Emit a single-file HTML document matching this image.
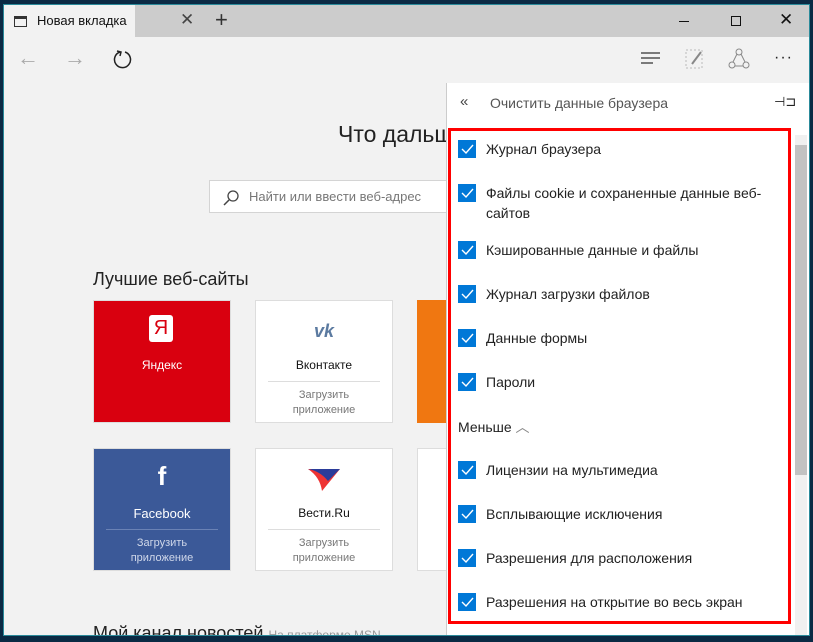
<!DOCTYPE html>
<html><head><meta charset="utf-8"><style>
*{margin:0;padding:0;box-sizing:border-box}
body{width:813px;height:642px;overflow:hidden;background:#0b2a44;font-family:"Liberation Sans","DejaVu Sans",sans-serif;position:relative}
.win{position:absolute;left:3px;top:4px;width:807px;height:632px;background:#f2f2f2;border:1px solid #2a8a9a;overflow:hidden}
.abs{position:absolute}
.tabbar{left:0;top:0;width:805px;height:32px;background:#cccccc}
.tab{left:0;top:0;width:131px;height:32px;background:#f2f2f2}
.cb{position:absolute;left:7px;width:18px;height:18px;background:#0078d7}
.cb svg{position:absolute;left:0;top:0}
.it{position:absolute;left:35px;font-size:14px;color:#222;line-height:20px}
.tile{position:absolute;width:138px;height:123px;border:1px solid #ddd;background:#fff;text-align:center;font-size:12px}
</style></head><body>
<div class="win">
 <div class="abs tabbar"></div>
 <div class="abs tab"></div>
 <div class="abs" style="left:10px;top:11px;width:13px;height:11px;border:1px solid #333;border-top-width:3px"></div>
 <div class="abs" style="left:33px;top:8px;font-size:13px;color:#111">Новая вкладка</div>
 <div class="abs" style="left:176px;top:5px;font-size:17px;color:#444">✕</div>
 <div class="abs" style="left:211px;top:2px;font-size:22px;color:#333;font-weight:300">+</div>
 <div class="abs" style="left:675px;top:16px;width:10px;height:1px;background:#111"></div>
 <div class="abs" style="left:727px;top:11px;width:10px;height:10px;border:1px solid #111"></div>
 <div class="abs" style="left:775px;top:5px;font-size:17px;color:#111">✕</div>
 <div class="abs" style="left:13px;top:40px;font-size:22px;color:#aaa">←</div>
 <div class="abs" style="left:60px;top:40px;font-size:22px;color:#aaa">→</div>
 <svg class="abs" style="left:108px;top:44px" width="22" height="22"><path d="M8 3 A8 8 0 1 0 13 3" fill="none" stroke="#222" stroke-width="1.5"/><path d="M5 2 L9 3 L8 7" fill="none" stroke="#222" stroke-width="1.5"/></svg>
 <svg class="abs" style="left:636px;top:46px" width="22" height="16"><path d="M1 2H20M1 7H20M1 12H13" stroke="#333" stroke-width="1.3"/></svg>
 <svg class="abs" style="left:680px;top:43px" width="22" height="22"><rect x="2" y="2" width="16" height="18" fill="none" stroke="#bbb" stroke-dasharray="2 2"/><path d="M8 16 L17 4" stroke="#888" stroke-width="2"/></svg>
 <svg class="abs" style="left:724px;top:43px" width="22" height="22"><circle cx="11" cy="4" r="3" fill="none" stroke="#888"/><circle cx="4" cy="17" r="3" fill="none" stroke="#888"/><circle cx="18" cy="17" r="3" fill="none" stroke="#888"/><path d="M9 6 L5 14 M13 6 L17 14 M7 18 H15" stroke="#888"/></svg>
 <div class="abs" style="left:770px;top:44px;font-size:16px;color:#222;letter-spacing:1px">···</div>

 <div class="abs" style="left:334px;top:116px;font-size:23px;color:#222">Что дальше?</div>
 <div class="abs" style="left:205px;top:175px;width:260px;height:33px;background:#fff;border:1px solid #d4d4d4"></div>
 <svg class="abs" style="left:218px;top:184px" width="18" height="18"><circle cx="11" cy="7" r="5" fill="none" stroke="#444" stroke-width="1.3"/><path d="M7 11 L2 16" stroke="#444" stroke-width="1.5"/></svg>
 <div class="abs" style="left:245px;top:184px;font-size:13px;color:#777">Найти или ввести веб-адрес</div>
 <div class="abs" style="left:89px;top:264px;font-size:18px;color:#222">Лучшие веб-сайты</div>

 <div class="tile" style="left:89px;top:295px;background:#d9000f;border-color:#ddd;color:#fff">
  <div style="position:absolute;left:55px;top:14px;width:24px;height:27px;background:#fff;border-radius:3px;color:#d9000f;font-size:20px;line-height:27px">Я</div>
  <div style="position:absolute;width:100%;top:57px">Яндекс</div></div>
 <div class="tile" style="left:251px;top:295px">
  <div style="position:absolute;width:100%;top:20px;color:#5b7aa0;font-weight:bold;font-size:18px;font-style:italic">vk</div>
  <div style="position:absolute;width:100%;top:57px;color:#111">Вконтакте</div>
  <div style="position:absolute;left:12px;width:112px;top:80px;border-top:1px solid #ddd"></div>
  <div style="position:absolute;width:100%;top:87px;color:#777;font-size:11px;line-height:15px">Загрузить<br>приложение</div></div>
 <div class="tile" style="left:413px;top:295px;background:#f07711;border-color:#f07711"></div>
 <div class="tile" style="left:89px;top:443px;background:#3b5998;color:#fff">
  <div style="position:absolute;width:100%;top:12px;font-size:26px;font-weight:bold">f</div>
  <div style="position:absolute;width:100%;top:57px;font-size:13px">Facebook</div>
  <div style="position:absolute;left:12px;width:112px;top:80px;border-top:1px solid #6a82b5"></div>
  <div style="position:absolute;width:100%;top:87px;color:#d0d8ea;font-size:11px;line-height:15px">Загрузить<br>приложение</div></div>
 <div class="tile" style="left:251px;top:443px">
  <svg style="position:absolute;left:52px;top:20px" width="34" height="24"><path d="M0 0 L32 0 L14 22 Q12 8 0 0Z" fill="#e33"/><path d="M0 0 L32 0 L20 12 Q12 2 0 0Z" fill="#2a3c9a"/></svg>
  <div style="position:absolute;width:100%;top:57px;color:#111">Вести.Ru</div>
  <div style="position:absolute;left:12px;width:112px;top:80px;border-top:1px solid #ddd"></div>
  <div style="position:absolute;width:100%;top:87px;color:#777;font-size:11px;line-height:15px">Загрузить<br>приложение</div></div>
 <div class="tile" style="left:413px;top:443px"></div>
 <div class="abs" style="left:89px;top:618px;font-size:18px;color:#222">Мой канал новостей <span style="font-size:12px;color:#999">На платформе MSN</span></div>

 <div class="abs" style="left:442px;top:78px;width:363px;height:560px;background:#fff;border-left:1px solid #ccc"></div>
 <div class="abs" style="left:456px;top:88px;font-size:15px;color:#444">«</div>
 <div class="abs" style="left:486px;top:90px;font-size:14px;color:#555">Очистить данные браузера</div>
 <div class="abs" style="left:770px;top:89px;font-size:13px;color:#222">⊣⊐</div>
 <div class="abs" style="left:791px;top:130px;width:12px;height:500px;background:#f0f0f0"></div>
 <div class="abs" style="left:791px;top:140px;width:12px;height:330px;background:#c2c2c2"></div>
 <div class="abs" style="left:444px;top:123px;width:343px;height:496px;border:3px solid #f00">
  <div class="cb" style="top:9px"><svg width="18" height="18"><path d="M4 9 L8 13 L15 5" fill="none" stroke="#fff" stroke-width="1.4"/></svg></div><div class="it" style="top:8px">Журнал браузера</div>
  <div class="cb" style="top:53px"><svg width="18" height="18"><path d="M4 9 L8 13 L15 5" fill="none" stroke="#fff" stroke-width="1.4"/></svg></div><div class="it" style="top:52px">Файлы cookie и сохраненные данные веб-<br>сайтов</div>
  <div class="cb" style="top:110px"><svg width="18" height="18"><path d="M4 9 L8 13 L15 5" fill="none" stroke="#fff" stroke-width="1.4"/></svg></div><div class="it" style="top:109px">Кэшированные данные и файлы</div>
  <div class="cb" style="top:154px"><svg width="18" height="18"><path d="M4 9 L8 13 L15 5" fill="none" stroke="#fff" stroke-width="1.4"/></svg></div><div class="it" style="top:153px">Журнал загрузки файлов</div>
  <div class="cb" style="top:198px"><svg width="18" height="18"><path d="M4 9 L8 13 L15 5" fill="none" stroke="#fff" stroke-width="1.4"/></svg></div><div class="it" style="top:197px">Данные формы</div>
  <div class="cb" style="top:242px"><svg width="18" height="18"><path d="M4 9 L8 13 L15 5" fill="none" stroke="#fff" stroke-width="1.4"/></svg></div><div class="it" style="top:241px">Пароли</div>
  <div class="it" style="left:7px;top:286px">Меньше <span style="color:#888">︿</span></div>
  <div class="cb" style="top:330px"><svg width="18" height="18"><path d="M4 9 L8 13 L15 5" fill="none" stroke="#fff" stroke-width="1.4"/></svg></div><div class="it" style="top:329px">Лицензии на мультимедиа</div>
  <div class="cb" style="top:374px"><svg width="18" height="18"><path d="M4 9 L8 13 L15 5" fill="none" stroke="#fff" stroke-width="1.4"/></svg></div><div class="it" style="top:373px">Всплывающие исключения</div>
  <div class="cb" style="top:418px"><svg width="18" height="18"><path d="M4 9 L8 13 L15 5" fill="none" stroke="#fff" stroke-width="1.4"/></svg></div><div class="it" style="top:417px">Разрешения для расположения</div>
  <div class="cb" style="top:462px"><svg width="18" height="18"><path d="M4 9 L8 13 L15 5" fill="none" stroke="#fff" stroke-width="1.4"/></svg></div><div class="it" style="top:461px">Разрешения на открытие во весь экран</div>
 </div>
</div>
</body></html>
